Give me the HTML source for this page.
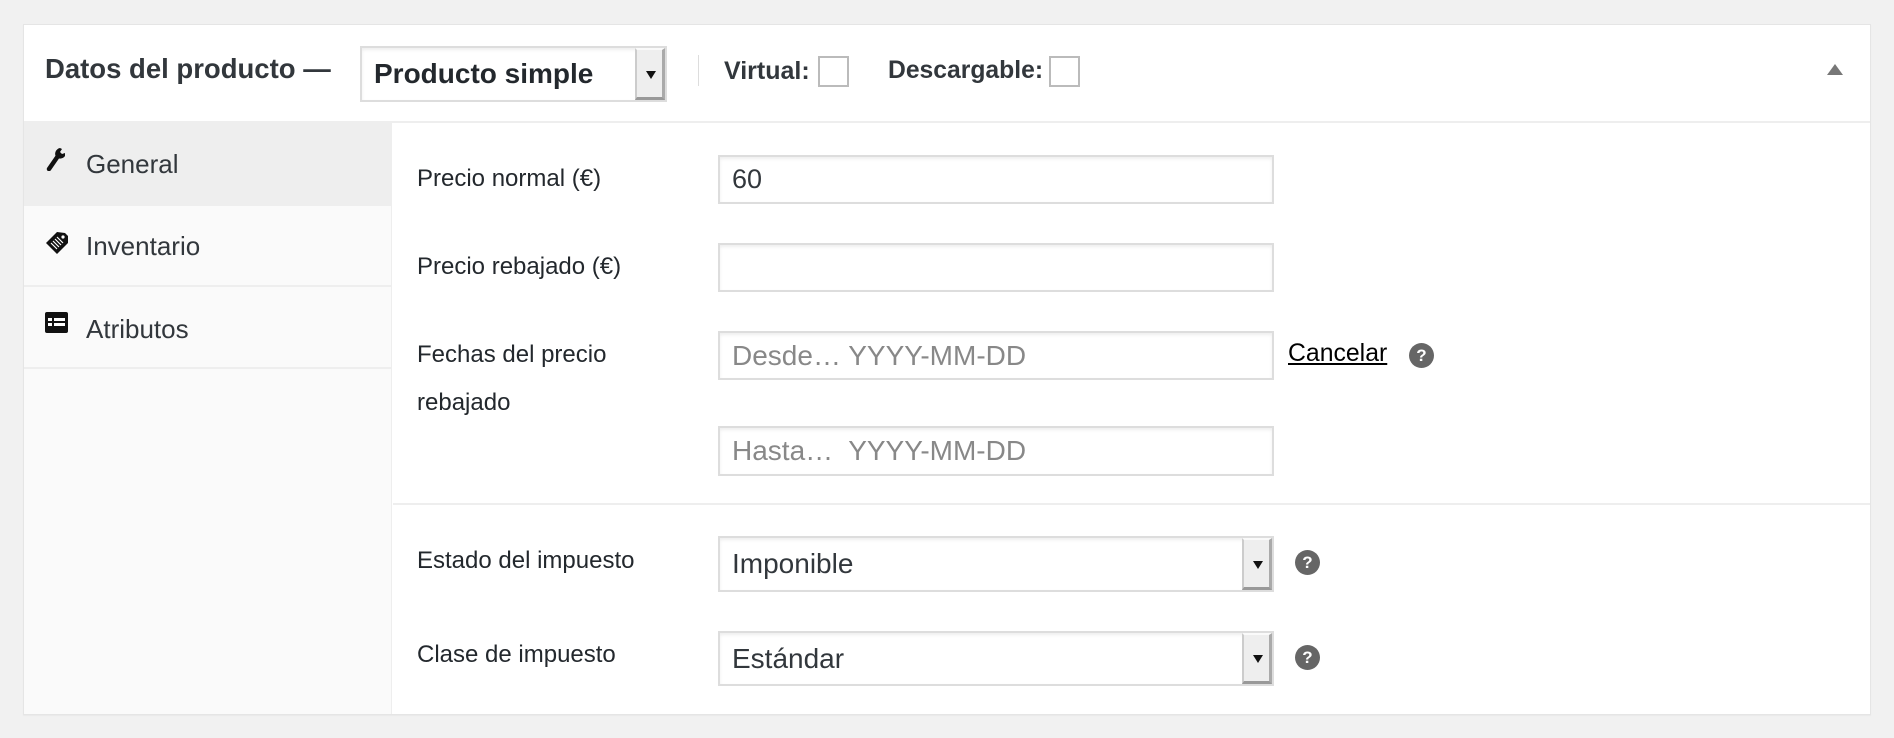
<!DOCTYPE html>
<html><head><meta charset="utf-8"><style>
*{box-sizing:border-box;margin:0;padding:0}
body{width:1894px;height:738px;background:#f1f1f1;font-family:"Liberation Sans",sans-serif;color:#32373c;position:relative;overflow:hidden}
.a{position:absolute}
.panel{left:23px;top:24px;width:1848px;height:691px;background:#fff;border:1px solid #e5e5e5;box-shadow:0 1px 1px rgba(0,0,0,.04)}
.lbl{font-size:24px;color:#23282d;position:absolute;left:417px}
.inp{position:absolute;left:718px;width:556px;background:#fff;border:2px solid #ddd;box-shadow:inset 0 2px 3px rgba(0,0,0,.07);font-size:26px;padding-left:12px;display:flex;align-items:center;color:#32373c}
.ph{color:#888;font-size:28px}
.sel .btn{position:absolute;right:0;top:0;bottom:0;width:30px;background:#eee;border-left:2px solid #ccc;border-right:3px solid #aaa;border-bottom:3px solid #999;border-top:2px solid #fafafa}
.sel .btn:after{content:"";position:absolute;left:9px;top:50%;margin-top:-3px;border-left:5px solid transparent;border-right:5px solid transparent;border-top:8px solid #111}
.help{position:absolute;width:25px;height:25px;border-radius:50%;background:#666;color:#fff;font-size:17px;font-weight:bold;text-align:center;line-height:25px}
.tab{position:absolute;left:24px;width:367px;border-bottom:2px solid #eee;font-size:26px;color:#32373c}
.tab span{position:absolute;left:62px}
</style></head><body>
<div class="a panel"></div>
<div class="a" style="left:24px;top:121px;width:1846px;height:2px;background:#eee"></div>
<div class="a" style="left:45px;top:53px;font-size:27.5px;font-weight:bold;color:#32373c">Datos del producto —</div>
<div class="a inp sel" style="left:360px;top:46px;width:307px;height:56px;font-size:28px;font-weight:bold;padding-left:12px;color:#23282d">Producto simple<div class="btn" style="width:30px"></div></div>
<div class="a" style="left:698px;top:55px;width:1px;height:31px;background:#ddd"></div>
<div class="a" style="left:724px;top:57px;font-size:25px;font-weight:bold;color:#32373c">Virtual:</div>
<div class="a" style="left:818px;top:56px;width:31px;height:31px;border:2px solid #bbb;background:#fff"></div>
<div class="a" style="left:888px;top:57px;font-size:24.7px;font-weight:bold;color:#32373c">Descargable:</div>
<div class="a" style="left:1049px;top:56px;width:31px;height:31px;border:2px solid #bbb;background:#fff"></div>
<div class="a" style="left:1827px;top:64px;border-left:8px solid transparent;border-right:8px solid transparent;border-bottom:11px solid #777"></div>
<div class="a" style="left:24px;top:123px;width:368px;height:591px;background:#fafafa;border-right:1px solid #eee"></div>
<div class="tab" style="top:123px;height:83px;background:#eee"><span style="top:26px">General</span>
<svg class="a" style="left:21px;top:24px" width="22" height="24" viewBox="0 0 22 24"><path d="M4 22 L13 9" stroke="#111" stroke-width="4.5" stroke-linecap="round"/><path d="M15 1 A6 6 0 0 0 11 10 A6 6 0 0 0 20 9 L20 6 L17 7 L15 5 L17 2 Z" fill="#111"/></svg></div>
<div class="tab" style="top:206px;height:81px"><span style="top:25px">Inventario</span>
<svg class="a" style="left:20px;top:24px" width="26" height="26" viewBox="0 0 26 26"><path d="M2 13 L13 2 L21 3 L24 6 L24 13 L13 24 Z" fill="#111"/><path d="M7 13 L13 19 M9 11 L15 17 M11 9 L17 15 M13 7 L19 13" stroke="#fff" stroke-width="1.2"/><circle cx="19" cy="7" r="1.6" fill="#fff"/></svg></div>
<div class="tab" style="top:287px;height:82px"><span style="top:27px">Atributos</span>
<svg class="a" style="left:21px;top:25px" width="23" height="21" viewBox="0 0 23 21"><rect x="0" y="0" width="23" height="21" rx="2" fill="#111"/><rect x="3" y="6" width="4" height="3" fill="#fff"/><rect x="9" y="6" width="11" height="3" fill="#fff"/><rect x="3" y="11" width="4" height="3" fill="#fff"/><rect x="9" y="11" width="11" height="3" fill="#fff"/></svg></div>
<div class="lbl" style="top:165px">Precio normal (€)</div>
<div class="inp" style="top:155px;height:49px;font-size:27px">60</div>
<div class="lbl" style="top:253px">Precio rebajado (€)</div>
<div class="inp" style="top:243px;height:49px"></div>
<div class="lbl" style="top:341px">Fechas del precio</div>
<div class="lbl" style="top:389px">rebajado</div>
<div class="inp ph" style="top:331px;height:49px">Desde… YYYY-MM-DD</div>
<div class="a" style="left:1288px;top:340px;font-size:24.8px;color:#000;text-decoration:underline">Cancelar</div>
<div class="help" style="left:1409px;top:343px">?</div>
<div class="inp ph" style="top:426px;height:50px">Hasta…&nbsp; YYYY-MM-DD</div>
<div class="a" style="left:393px;top:503px;width:1477px;height:2px;background:#eee"></div>
<div class="lbl" style="top:547px">Estado del impuesto</div>
<div class="inp sel" style="top:536px;height:56px;font-size:28px">Imponible<div class="btn"></div></div>
<div class="help" style="left:1295px;top:550px">?</div>
<div class="lbl" style="top:641px">Clase de impuesto</div>
<div class="inp sel" style="top:631px;height:55px;font-size:28px">Estándar<div class="btn"></div></div>
<div class="help" style="left:1295px;top:645px">?</div>
</body></html>
